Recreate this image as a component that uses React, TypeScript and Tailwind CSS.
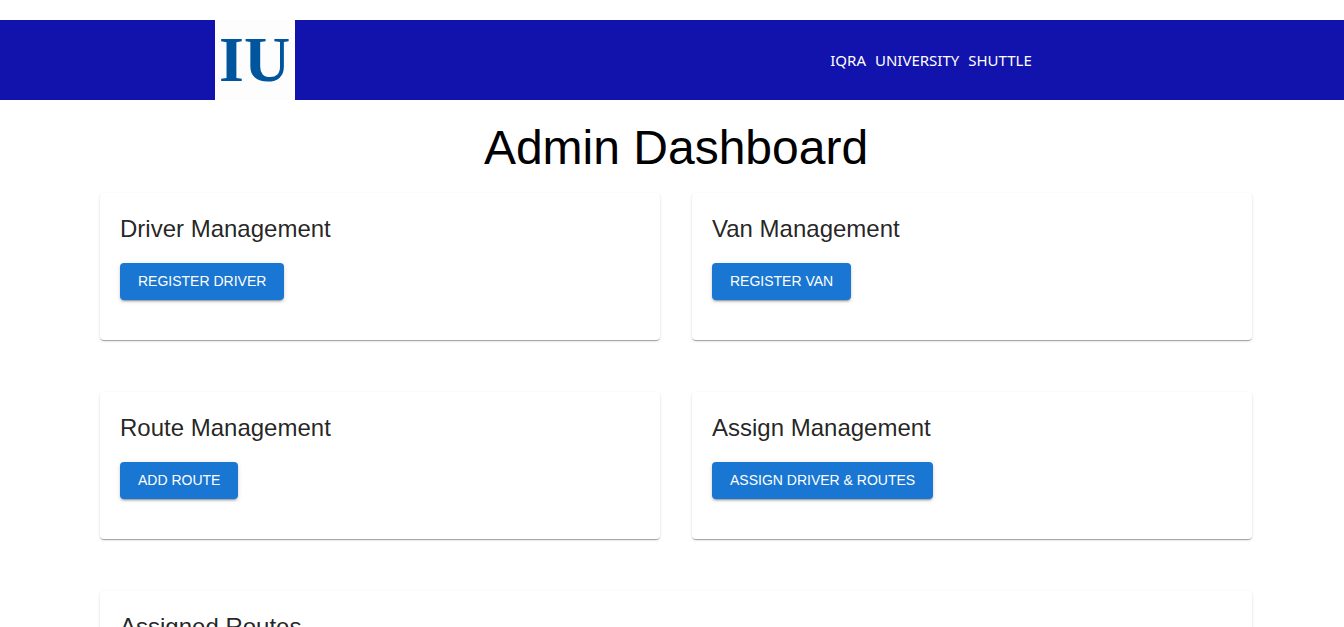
type ManagementCardProps = {
  title: string;
  action: string;
};

const cardClass =
  "rounded bg-white px-5 pt-5 pb-10 shadow-[0_2px_1px_-1px_rgba(0,0,0,0.2),0_1px_1px_0_rgba(0,0,0,0.14),0_1px_3px_0_rgba(0,0,0,0.12)]";

const sections: ManagementCardProps[] = [
  { title: "Driver Management", action: "Register Driver" },
  { title: "Van Management", action: "Register Van" },
  { title: "Route Management", action: "Add Route" },
  { title: "Assign Management", action: "Assign Driver & Routes" },
];

const navWords = ["IQRA", "UNIVERSITY", "SHUTTLE"];

function CardTitle({ children }: { children: string }) {
  return <h2 className="text-2xl leading-8 text-black/87">{children}</h2>;
}

function ManagementCard({ title, action }: ManagementCardProps) {
  return (
    <section className={cardClass}>
      <CardTitle>{title}</CardTitle>
      <button
        type="button"
        className="mt-[18px] block rounded bg-[#1976d2] px-[18px] py-1.5 text-sm leading-[25px] text-white uppercase shadow-[0_3px_1px_-2px_rgba(0,0,0,0.2),0_2px_2px_0_rgba(0,0,0,0.14),0_1px_5px_0_rgba(0,0,0,0.12)] hover:bg-[#1565c0]"
      >
        {action}
      </button>
    </section>
  );
}

function Header() {
  return (
    <header className="mt-5 flex h-20 items-center justify-around bg-[#1212ac]">
      <svg className="size-20 bg-[#fdfdfd]" viewBox="0 0 80 80" role="img" aria-label="IU">
        <text
          x="4"
          y="61"
          fontSize="64"
          fontWeight="700"
          fill="#00559c"
          fontFamily="'Liberation Serif', serif"
        >
          IU
        </text>
      </svg>
      <nav className="flex w-[404px] justify-center pl-2">
        <a
          href="#"
          className="flex gap-[9px] font-['Noto_Sans','Open_Sans',sans-serif] text-[15px] leading-6 text-white"
        >
          {navWords.map((word) => (
            <span key={word}>{word}</span>
          ))}
        </a>
      </nav>
    </header>
  );
}

export default function App() {
  return (
    <div className="flow-root bg-white font-['Liberation_Sans',Arial,sans-serif]">
      <Header />
      <main className="pt-5 pl-2">
        <div className="mx-auto max-w-[1200px] px-6">
          <h1 className="text-center text-5xl leading-[56px] text-black">Admin Dashboard</h1>
          <div className="mt-[17px] grid grid-cols-1 gap-x-8 gap-y-[52px] md:grid-cols-2">
            {sections.map((section) => (
              <ManagementCard key={section.title} {...section} />
            ))}
            <section className={`${cardClass} md:col-span-2`}>
              <CardTitle>Assigned Routes</CardTitle>
            </section>
          </div>
        </div>
      </main>
    </div>
  );
}
